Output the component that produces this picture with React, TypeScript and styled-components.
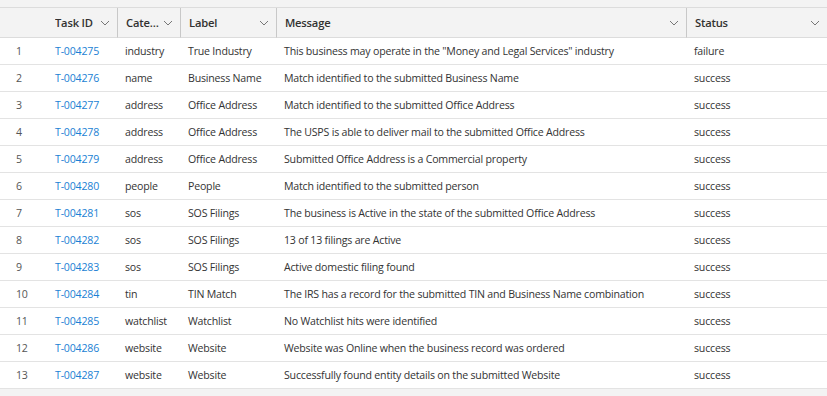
import React from 'react'
import styled, { createGlobalStyle } from 'styled-components'

const GlobalStyle = createGlobalStyle`
  html, body {
    margin: 0;
    padding: 0;
    background: #f3f3f3;
  }
  body {
    font-family: 'Open Sans', 'Noto Sans', sans-serif;
    font-size: 10.6px;
    letter-spacing: -0.2px;
    color: #333;
  }
`

interface Row {
  id: string
  category: string
  label: string
  message: string
  status: string
}

const rows: Row[] = [
  { id: 'T-004275', category: 'industry', label: 'True Industry', message: 'This business may operate in the "Money and Legal Services" industry', status: 'failure' },
  { id: 'T-004276', category: 'name', label: 'Business Name', message: 'Match identified to the submitted Business Name', status: 'success' },
  { id: 'T-004277', category: 'address', label: 'Office Address', message: 'Match identified to the submitted Office Address', status: 'success' },
  { id: 'T-004278', category: 'address', label: 'Office Address', message: 'The USPS is able to deliver mail to the submitted Office Address', status: 'success' },
  { id: 'T-004279', category: 'address', label: 'Office Address', message: 'Submitted Office Address is a Commercial property', status: 'success' },
  { id: 'T-004280', category: 'people', label: 'People', message: 'Match identified to the submitted person', status: 'success' },
  { id: 'T-004281', category: 'sos', label: 'SOS Filings', message: 'The business is Active in the state of the submitted Office Address', status: 'success' },
  { id: 'T-004282', category: 'sos', label: 'SOS Filings', message: '13 of 13 filings are Active', status: 'success' },
  { id: 'T-004283', category: 'sos', label: 'SOS Filings', message: 'Active domestic filing found', status: 'success' },
  { id: 'T-004284', category: 'tin', label: 'TIN Match', message: 'The IRS has a record for the submitted TIN and Business Name combination', status: 'success' },
  { id: 'T-004285', category: 'watchlist', label: 'Watchlist', message: 'No Watchlist hits were identified', status: 'success' },
  { id: 'T-004286', category: 'website', label: 'Website', message: 'Website was Online when the business record was ordered', status: 'success' },
  { id: 'T-004287', category: 'website', label: 'Website', message: 'Successfully found entity details on the submitted Website', status: 'success' }
]

const columns = '47px 70px 63px 96px 410px 141px'

const Page = styled.div`
  width: 827px;
  padding-top: 7px;
  padding-bottom: 4px;
`

const Grid = styled.div`
  display: grid;
  grid-template-columns: ${columns};
  border-top: 1px solid #dcdcdc;
`

const HeaderCell = styled.div<{ $divider?: boolean }>`
  display: flex;
  align-items: center;
  height: 29px;
  padding: 0 7px 0 8px;
  background: #f3f3f3;
  border-bottom: 1px solid #dcdcdc;
  border-left: ${({ $divider }) => ($divider ? '1px solid #c8c8c8' : 'none')};
  font-size: 11.2px;
  font-weight: 600;
  letter-spacing: -0.2px;
  color: #323130;
  white-space: nowrap;
  overflow: hidden;
`

const HeaderLabel = styled.span`
  flex: 1;
  min-width: 0;
  overflow: hidden;
  text-overflow: ellipsis;
`

const Chevron = styled.svg`
  flex: none;
  width: 10px;
  height: 6px;
  margin-left: 3px;
`

const Cell = styled.div<{ $tone?: 'link' | 'muted' }>`
  display: flex;
  align-items: center;
  height: 26px;
  padding: 0 8px;
  background: #fff;
  border-bottom: 1px solid #e3e3e3;
  white-space: nowrap;
  overflow: hidden;
  color: ${({ $tone }) => ($tone === 'link' ? '#1b7fd4' : $tone === 'muted' ? '#555' : '#333')};
`

const IndexCell = styled(Cell)`
  padding-left: 16px;
`

const ChevronIcon = () => (
  <Chevron viewBox="0 0 10 6">
    <path d="M1 1 L5 5 L9 1" fill="none" stroke="#777" strokeWidth="1" />
  </Chevron>
)

const Header = ({ label, divider }: { label: string; divider?: boolean }) => (
  <HeaderCell $divider={divider}>
    <HeaderLabel>{label}</HeaderLabel>
    <ChevronIcon />
  </HeaderCell>
)

export default function App() {
  return (
    <>
      <GlobalStyle />
      <Page>
        <Grid>
          <HeaderCell />
          <Header label="Task ID" />
          <Header label="Category" divider />
          <Header label="Label" divider />
          <Header label="Message" divider />
          <Header label="Status" divider />
          {rows.map((row, i) => (
            <React.Fragment key={row.id}>
              <IndexCell $tone="muted">{i + 1}</IndexCell>
              <Cell $tone="link">{row.id}</Cell>
              <Cell>{row.category}</Cell>
              <Cell>{row.label}</Cell>
              <Cell>{row.message}</Cell>
              <Cell>{row.status}</Cell>
            </React.Fragment>
          ))}
        </Grid>
      </Page>
    </>
  )
}
